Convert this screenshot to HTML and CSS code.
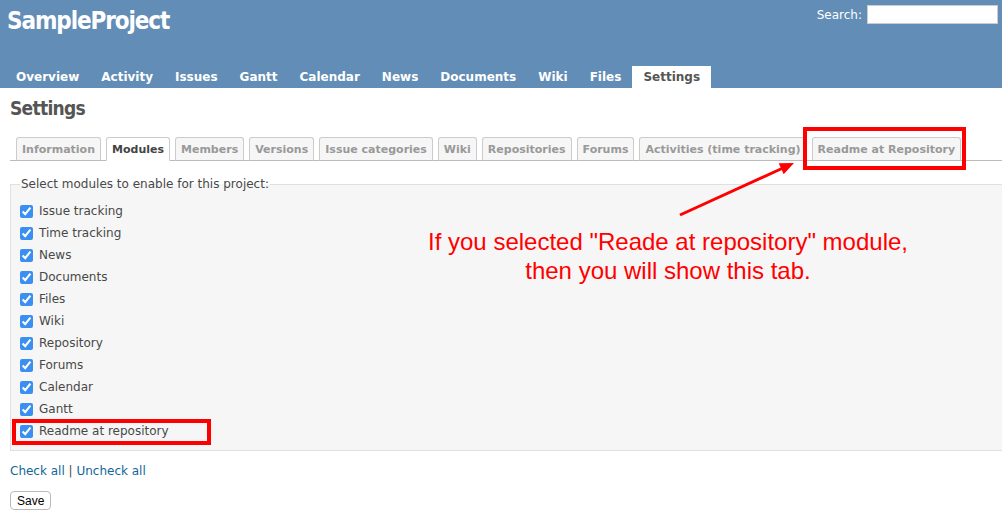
FILE: index.html
```html
<!DOCTYPE html>
<html lang="en">
<head>
    <meta charset="UTF-8">
    <title>Settings - SampleProject</title>
    <link rel="stylesheet" href="styles.css">
</head>
<body>
    <div class="header">
        <div class="quick-search">
            <label for="q">Search:</label>
            <input type="text" id="q">
        </div>
        <h1>SampleProject</h1>
        <ul class="main-menu">
            <li><a href="#">Overview</a></li>
            <li><a href="#">Activity</a></li>
            <li><a href="#">Issues</a></li>
            <li><a href="#">Gantt</a></li>
            <li><a href="#">Calendar</a></li>
            <li><a href="#">News</a></li>
            <li><a href="#">Documents</a></li>
            <li><a href="#">Wiki</a></li>
            <li><a href="#">Files</a></li>
            <li><a href="#" class="selected">Settings</a></li>
        </ul>
    </div>

    <div class="content">
        <h2>Settings</h2>

        <ul class="tabs">
            <li><a href="#">Information</a></li>
            <li><a href="#" class="selected">Modules</a></li>
            <li><a href="#">Members</a></li>
            <li><a href="#">Versions</a></li>
            <li><a href="#">Issue categories</a></li>
            <li><a href="#">Wiki</a></li>
            <li><a href="#">Repositories</a></li>
            <li><a href="#">Forums</a></li>
            <li><a href="#">Activities (time tracking)</a></li>
            <li><a href="#">Readme at Repository</a></li>
        </ul>

        <form>
            <fieldset class="box">
                <legend>Select modules to enable for this project:</legend>
                <label><input type="checkbox" checked> Issue tracking</label>
                <label><input type="checkbox" checked> Time tracking</label>
                <label><input type="checkbox" checked> News</label>
                <label><input type="checkbox" checked> Documents</label>
                <label><input type="checkbox" checked> Files</label>
                <label><input type="checkbox" checked> Wiki</label>
                <label><input type="checkbox" checked> Repository</label>
                <label><input type="checkbox" checked> Forums</label>
                <label><input type="checkbox" checked> Calendar</label>
                <label><input type="checkbox" checked> Gantt</label>
                <label><input type="checkbox" checked> Readme at repository</label>
            </fieldset>
            <p class="check-links"><a href="#">Check all</a> | <a href="#">Uncheck all</a></p>
            <button type="button" class="save">Save</button>
        </form>
    </div>

    <!-- annotation drawn over the screenshot -->
    <div class="mark mark-tab"></div>
    <div class="mark mark-module"></div>
    <svg class="arrow" width="1002" height="519" viewBox="0 0 1002 519">
        <line x1="680" y1="215" x2="783" y2="168" stroke="#f00" stroke-width="3"/>
        <polygon points="794,163 783.7,174.3 778.7,163.3" fill="#f00"/>
    </svg>
    <div class="note">If you selected "Reade at repository" module,<br>then you will show this tab.</div>
</body>
</html>
```

FILE: styles.css
```css
body {
    margin: 0;
    font-family: "DejaVu Sans", Verdana, sans-serif;
    font-size: 12px;
    color: #484848;
    background: #fff;
    overflow: hidden;
}

a { color: #169; text-decoration: none; }

/* Header */
.header {
    position: relative;
    height: 88px;
    background: #628db6;
    color: #fff;
}

.header h1 {
    margin: 0;
    padding: 5px 0 0 7px;
    font-family: "DejaVu Sans Condensed", "DejaVu Sans", sans-serif;
    font-size: 24px;
    font-weight: bold;
    letter-spacing: -1.1px;
    line-height: 32px;
}

.quick-search {
    position: absolute;
    top: 5px;
    right: 4px;
    display: flex;
    align-items: center;
    gap: 5px;
}

.quick-search input {
    width: 131px;
    height: 19px;
    box-sizing: border-box;
    border: 1px solid #ccc;
    padding: 1px 3px;
}

.main-menu {
    list-style: none;
    margin: 0;
    padding: 0 0 0 5px;
    position: absolute;
    left: 0;
    bottom: 0;
    display: flex;
}

.main-menu a {
    display: block;
    color: #fff;
    font-weight: bold;
    font-size: 12px;
    padding: 5px 11px 4px 11px;
    line-height: 13px;
}

.main-menu a.selected {
    background: #fff;
    color: #555;
}

/* Content */
.content {
    padding: 0 0 0 10px;
}

.content h2 {
    margin: 0;
    padding: 9px 0 0;
    font-family: "DejaVu Sans Condensed", "DejaVu Sans", sans-serif;
    font-size: 19px;
    letter-spacing: -0.7px;
    line-height: 22px;
    color: #555;
}

.tabs {
    list-style: none;
    margin: 18px 0 0;
    padding: 0 0 0 6px;
    display: flex;
    gap: 5px;
    border-bottom: 1px solid #bbb;
    height: 23px;
}

.tabs a {
    display: block;
    height: 24px;
    box-sizing: border-box;
    padding: 5px 5px 0;
    font-size: 11px;
    font-weight: bold;
    color: #999;
    background: #f6f6f6;
    border: 1px solid #ccc;
    border-bottom: 1px solid #bbb;
    border-radius: 3px 3px 0 0;
}

.tabs a.selected {
    background: #fff;
    color: #444;
    border-bottom-color: #fff;
}

.box {
    margin: 16px -2px 0 0;
    padding: 9px 10px 8px 9px;
    background: #f6f6f6;
    border: 1px solid #e0e0e0;
    display: flex;
    flex-direction: column;
}

.box legend {
    padding: 0 1px;
    color: #484848;
}

.box label {
    display: flex;
    align-items: center;
    height: 22px;
    gap: 6px;
}

.box input {
    margin: 0;
    width: 13px;
    height: 13px;
    accent-color: #3a8ff0;
}

.check-links {
    margin: 12px 0 12px;
    line-height: 16px;
}

.save {
    font-family: "Liberation Sans", Arial, sans-serif;
    font-size: 12px;
    padding: 1px 6px;
    height: 19px;
    background: #fff;
    border: 1px solid #bbb;
    border-radius: 4px;
    color: #000;
}

/* Annotation */
.mark {
    position: absolute;
    box-sizing: border-box;
    border: 4px solid #f00;
}

.mark-tab { left: 803px; top: 127px; width: 163px; height: 43px; }
.mark-module { left: 12px; top: 419px; width: 199px; height: 26px; }

.arrow {
    position: absolute;
    left: 0;
    top: 0;
    pointer-events: none;
}

.note {
    position: absolute;
    left: 368px;
    top: 227px;
    width: 600px;
    text-align: center;
    font-family: "Liberation Sans", Arial, sans-serif;
    font-size: 24px;
    line-height: 29px;
    color: #f00;
}
```
